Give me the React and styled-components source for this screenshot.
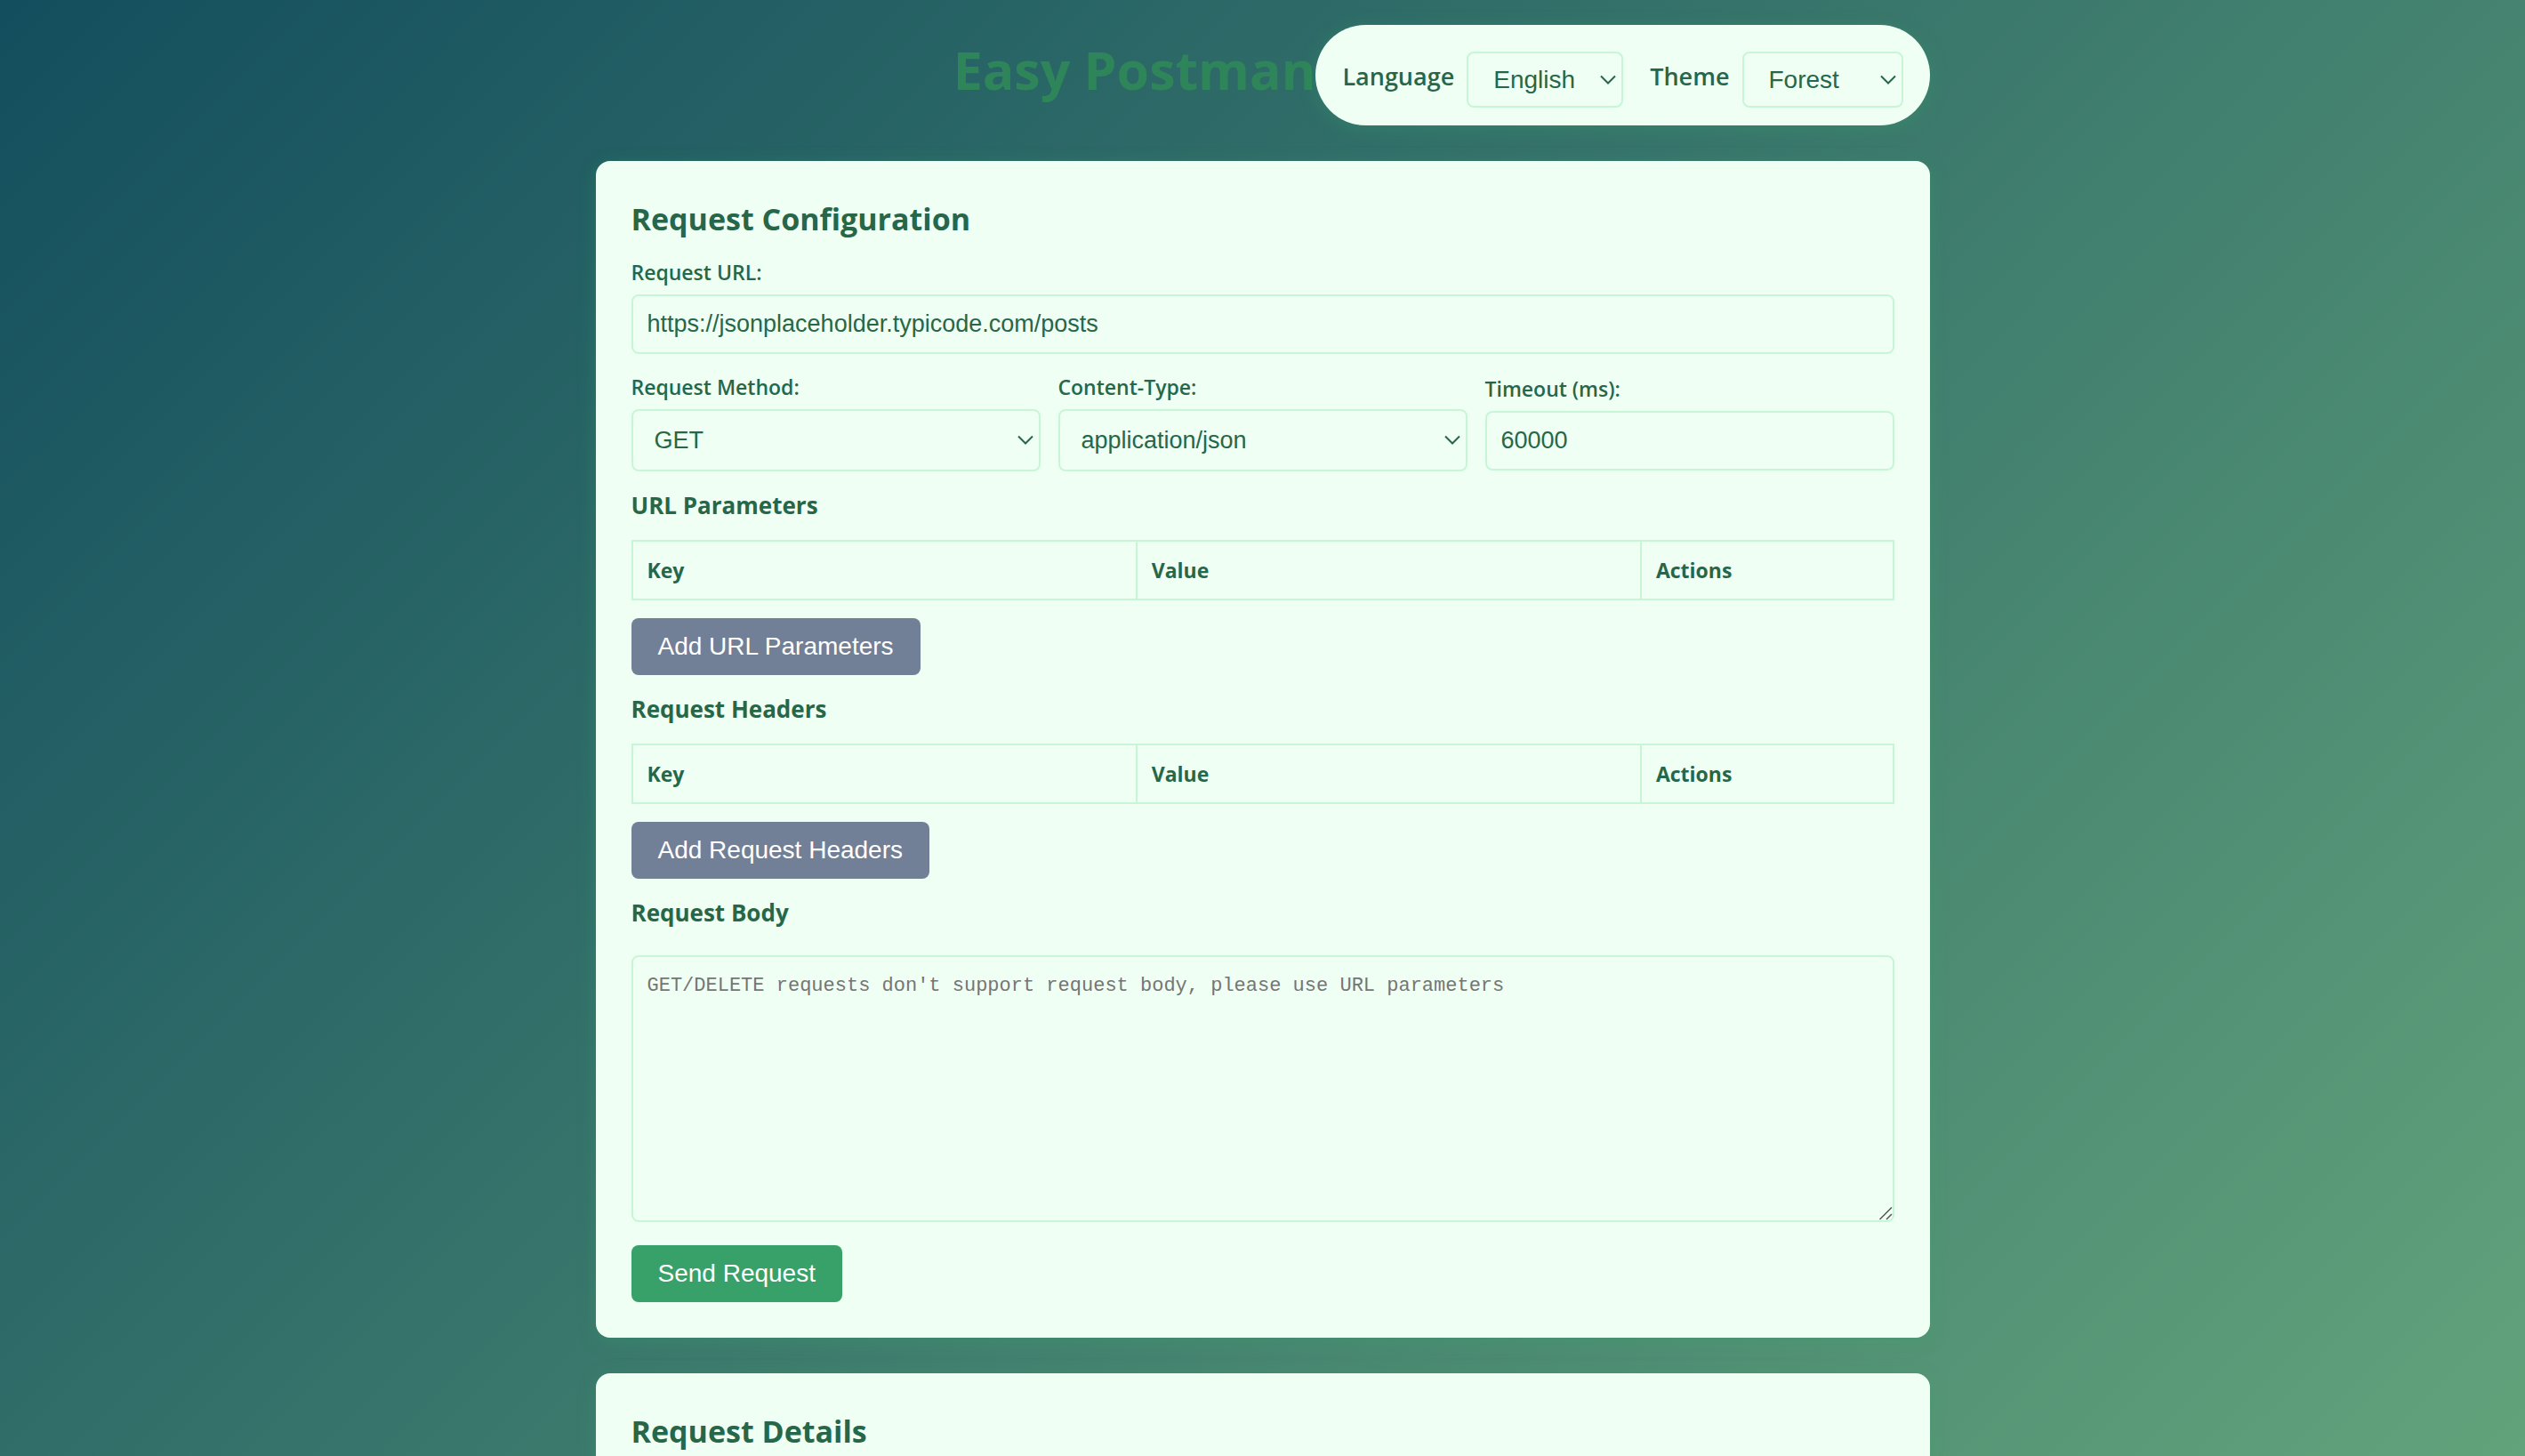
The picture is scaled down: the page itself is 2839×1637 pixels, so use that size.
import React, { useState } from "react";
import styled, { createGlobalStyle } from "styled-components";

const color = {
  surface: "#f0fff4",
  border: "#c6f6d5",
  text: "#276749",
  title: "#2f855a",
  primary: "#38a169",
  secondary: "#718096",
};
const uiFont = `"Segoe UI", "Open Sans", "Noto Sans", sans-serif`;
const controlFont = `Arial, "Liberation Sans", sans-serif`;
const shadow = "0 4px 20px rgba(56, 161, 105, 0.3)";

const GlobalStyle = createGlobalStyle`
  *, *::before, *::after { box-sizing: border-box; }
  body { margin: 0; }
`;

const Page = styled.div`
  height: 100vh;
  overflow: hidden;
  padding: 28px 20px 0;
  background: linear-gradient(135deg, #134e5e 0%, #71b280 118%);
  color: ${color.text};
  font-family: ${uiFont};
`;

const Container = styled.main`
  max-width: 1500px;
  margin: 0 auto;
`;

const Header = styled.header`
  display: flex;
  justify-content: flex-end;
  align-items: center;
  margin-bottom: 40px;
`;

const Title = styled.h1`
  margin: 0 0 14px;
  color: ${color.title};
  font-size: 59px;
  font-weight: 700;
  line-height: 80px;
  white-space: nowrap;
`;

const Settings = styled.div`
  display: flex;
  align-items: flex-start;
  gap: 30px;
  padding: 30px 30px 20px;
  border-radius: 60px;
  background: ${color.surface};
  box-shadow: ${shadow};
`;

const Setting = styled.div`
  display: flex;
  gap: 14px;
`;

const SettingLabel = styled.label`
  font-size: 27px;
  font-weight: 600;
  line-height: 56px;
`;

const SelectWrap = styled.div`
  display: grid;
  align-items: center;
  width: ${(p) => p.$width || "100%"};

  > * { grid-area: 1 / 1; }
  > svg { justify-self: end; margin-right: 8px; pointer-events: none; }
`;

const StyledSelect = styled.select`
  appearance: none;
  width: 100%;
  height: ${(p) => (p.$compact ? 63 : 70)}px;
  padding: 0 ${(p) => (p.$compact ? 28 : 24)}px;
  border: 2px solid ${color.border};
  border-radius: 8px;
  background: transparent;
  color: ${color.text};
  font-family: ${controlFont};
  font-size: ${(p) => (p.$compact ? 28 : 27)}px;
`;

const Card = styled.section`
  margin-bottom: 40px;
  padding: 40px;
  border-radius: 16px;
  background: ${color.surface};
  box-shadow: ${shadow};
`;

const CardTitle = styled.h2`
  margin: 0 0 18px;
  font-size: 34px;
  font-weight: 700;
  line-height: 50px;
`;

const Subtitle = styled.h3`
  margin: 20px 0;
  font-size: 26px;
  font-weight: 700;
  line-height: 37px;
`;

const Field = styled.div`
  display: grid;
  gap: 8px;
`;

const FieldLabel = styled.label`
  font-size: 23px;
  font-weight: 600;
  line-height: 34px;
`;

const Input = styled.input`
  width: 100%;
  height: 67px;
  padding: 0 16px;
  border: 2px solid ${color.border};
  border-radius: 8px;
  background: transparent;
  color: ${color.text};
  font-family: ${controlFont};
  font-size: 27px;
`;

const FieldRow = styled.div`
  display: grid;
  grid-template-columns: repeat(3, 1fr);
  align-items: center;
  gap: 20px;
  margin-top: 20px;
`;

const Table = styled.table`
  width: 100%;
  height: 68px;
  margin-bottom: 20px;
  border-collapse: collapse;
  table-layout: fixed;
`;

const Th = styled.th`
  width: ${(p) => p.$width};
  padding: 0 16px;
  border: 2px solid ${color.border};
  font-size: 23px;
  font-weight: 700;
  text-align: left;
`;

const Button = styled.button`
  display: block;
  height: 64px;
  padding: 0 30px;
  border: 0;
  border-radius: 8px;
  background: ${(p) => (p.$primary ? color.primary : color.secondary)};
  color: #fff;
  font-family: ${controlFont};
  font-size: 28px;
  cursor: pointer;
`;

const BodyInput = styled.textarea`
  display: block;
  width: 100%;
  height: 300px;
  margin: 29px 0 26px;
  padding: 18px 16px;
  border: 2px solid ${color.border};
  border-radius: 8px;
  background: transparent;
  color: ${color.text};
  font-family: NSimSun, "Liberation Mono", monospace;
  font-size: 22px;
  line-height: 30px;
  resize: vertical;

  &::placeholder { color: #757575; }
  &::-webkit-resizer {
    background: url("data:image/svg+xml,%3Csvg xmlns='http://www.w3.org/2000/svg' width='15' height='15'%3E%3Cpath d='M0.5 14L14 0.5M8 14L14 8' stroke='%23555' stroke-width='1.5'/%3E%3C/svg%3E") no-repeat;
  }
`;

function Chevron() {
  return (
    <svg width="18" height="12" viewBox="0 0 18 12" fill="none" stroke={color.text} strokeWidth="2" aria-hidden="true">
      <path d="M1 1.5L9 9.5L17 1.5" />
    </svg>
  );
}

function Select({ id, options, width, compact }) {
  return (
    <SelectWrap $width={width}>
      <StyledSelect id={id} $compact={compact} defaultValue={options[0]}>
        {options.map((o) => (
          <option key={o}>{o}</option>
        ))}
      </StyledSelect>
      <Chevron />
    </SelectWrap>
  );
}

function PairTable({ label }) {
  return (
    <Table aria-label={label}>
      <thead>
        <tr>
          <Th $width="40%">Key</Th>
          <Th $width="40%">Value</Th>
          <Th $width="20%">Actions</Th>
        </tr>
      </thead>
    </Table>
  );
}

export default function App() {
  const [url, setUrl] = useState("https://jsonplaceholder.typicode.com/posts");
  const [timeout, setTimeoutMs] = useState("60000");

  return (
    <Page>
      <GlobalStyle />
      <Container>
        <Header>
          <Title>Easy Postman</Title>
          <Settings>
            <Setting>
              <SettingLabel htmlFor="language">Language</SettingLabel>
              <Select id="language" options={["English"]} width="176px" compact />
            </Setting>
            <Setting>
              <SettingLabel htmlFor="theme">Theme</SettingLabel>
              <Select id="theme" options={["Forest"]} width="181px" compact />
            </Setting>
          </Settings>
        </Header>

        <Card>
          <CardTitle>Request Configuration</CardTitle>
          <Field>
            <FieldLabel htmlFor="url">Request URL:</FieldLabel>
            <Input id="url" value={url} onChange={(e) => setUrl(e.target.value)} />
          </Field>
          <FieldRow>
            <Field>
              <FieldLabel htmlFor="method">Request Method:</FieldLabel>
              <Select id="method" options={["GET"]} />
            </Field>
            <Field>
              <FieldLabel htmlFor="content-type">Content-Type:</FieldLabel>
              <Select id="content-type" options={["application/json"]} />
            </Field>
            <Field>
              <FieldLabel htmlFor="timeout">Timeout (ms):</FieldLabel>
              <Input id="timeout" type="number" value={timeout} onChange={(e) => setTimeoutMs(e.target.value)} />
            </Field>
          </FieldRow>

          <Subtitle>URL Parameters</Subtitle>
          <PairTable label="URL Parameters" />
          <Button type="button">Add URL Parameters</Button>

          <Subtitle>Request Headers</Subtitle>
          <PairTable label="Request Headers" />
          <Button type="button">Add Request Headers</Button>

          <Subtitle id="body-title">Request Body</Subtitle>
          <BodyInput
            aria-labelledby="body-title"
            placeholder="GET/DELETE requests don't support request body, please use URL parameters"
          />
          <Button type="button" $primary>Send Request</Button>
        </Card>

        <Card>
          <CardTitle>Request Details</CardTitle>
        </Card>
      </Container>
    </Page>
  );
}
